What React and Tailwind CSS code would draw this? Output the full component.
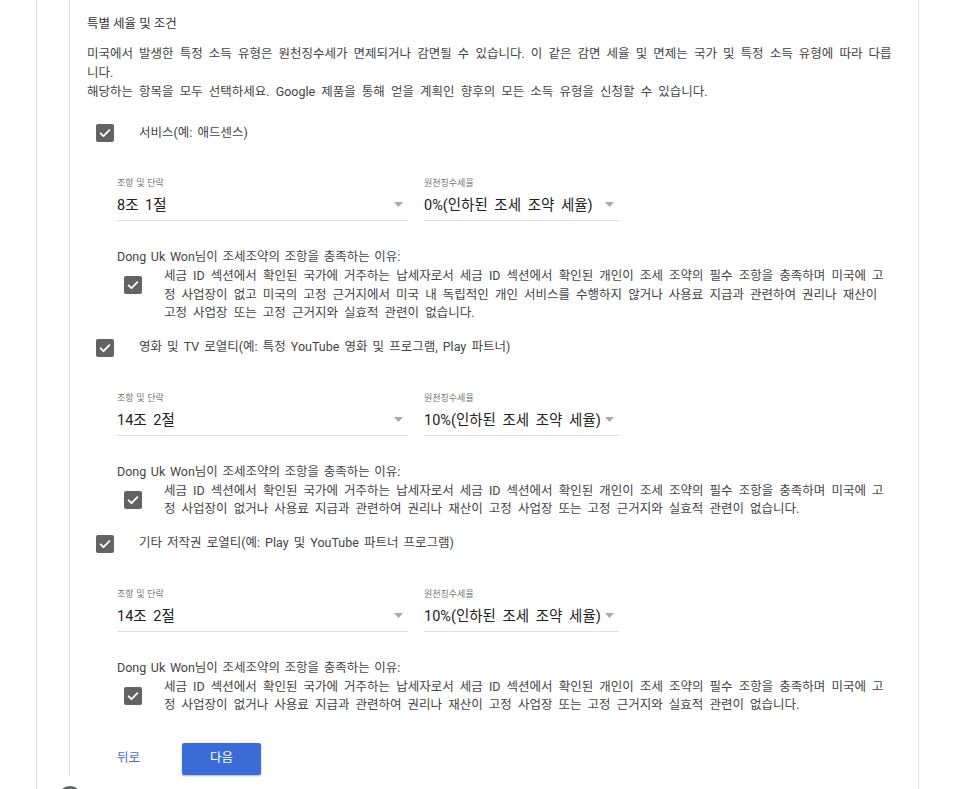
import React from 'react';

const sections = [
  {
    label: '서비스(예: 애드센스)',
    article: '8조 1절',
    rate: '0%(인하된 조세 조약 세율)',
    reason: [
      '세금 ID 섹션에서 확인된 국가에 거주하는 납세자로서 세금 ID 섹션에서 확인된 개인이 조세 조약의 필수 조항을 충족하며 미국에 고',
      '정 사업장이 없고 미국의 고정 근거지에서 미국 내 독립적인 개인 서비스를 수행하지 않거나 사용료 지급과 관련하여 권리나 재산이',
      '고정 사업장 또는 고정 근거지와 실효적 관련이 없습니다.',
    ],
  },
  {
    label: '영화 및 TV 로열티(예: 특정 YouTube 영화 및 프로그램, Play 파트너)',
    article: '14조 2절',
    rate: '10%(인하된 조세 조약 세율)',
    reason: [
      '세금 ID 섹션에서 확인된 국가에 거주하는 납세자로서 세금 ID 섹션에서 확인된 개인이 조세 조약의 필수 조항을 충족하며 미국에 고',
      '정 사업장이 없거나 사용료 지급과 관련하여 권리나 재산이 고정 사업장 또는 고정 근거지와 실효적 관련이 없습니다.',
    ],
  },
  {
    label: '기타 저작권 로열티(예: Play 및 YouTube 파트너 프로그램)',
    article: '14조 2절',
    rate: '10%(인하된 조세 조약 세율)',
    reason: [
      '세금 ID 섹션에서 확인된 국가에 거주하는 납세자로서 세금 ID 섹션에서 확인된 개인이 조세 조약의 필수 조항을 충족하며 미국에 고',
      '정 사업장이 없거나 사용료 지급과 관련하여 권리나 재산이 고정 사업장 또는 고정 근거지와 실효적 관련이 없습니다.',
    ],
  },
];

function Check() {
  return (
    <span className="flex h-[18px] w-[18px] shrink-0 items-center justify-center rounded-[2px] bg-[#636363]">
      <svg width="14" height="14" viewBox="0 0 14 14" fill="none">
        <path d="M2.6 7.3l2.9 2.9 5.9-6" stroke="#fff" strokeWidth="1.8" strokeLinecap="round" strokeLinejoin="round" />
      </svg>
    </span>
  );
}

function Arrow() {
  return (
    <svg width="9" height="5" viewBox="0 0 9 5" className="shrink-0 mb-[3px]">
      <path d="M0 0h9L4.5 5z" fill="#a8a8a8" />
    </svg>
  );
}

function Field({ label, value, width }) {
  return (
    <div className={width}>
      <div className="h-[12px] text-[9px] leading-[12px] text-[#757575] [word-spacing:0.5px]">{label}</div>
      <div className="mt-[7px] flex h-[20px] items-center justify-between pr-[5px]">
        <span className="whitespace-nowrap text-[14.5px] leading-[20px] text-[#222]">{value}</span>
        <Arrow />
      </div>
      <div className="mt-[4px] border-b border-[#e0e0e0]" />
    </div>
  );
}

function Section({ s, first }) {
  return (
    <div className={first ? 'mt-[23px]' : 'mt-[16px]'}>
      <div className="flex h-[18px] items-center pl-[9px]">
        <Check />
        <span className="ml-[25px] text-[12.5px] text-[#444] [word-spacing:2px]">{s.label}</span>
      </div>
      <div className="ml-[30px]">
        <div className="mt-[35px] flex gap-[16px]">
          <Field label="조항 및 단락" value={s.article} width="w-[291px]" />
          <Field label="원천징수세율" value={s.rate} width="w-[195px]" />
        </div>
        <div className="mt-[27px] text-[12.5px] leading-[18px] text-[#444] [word-spacing:1.5px]">
          Dong Uk Won님이 조세조약의 조항을 충족하는 이유:
        </div>
        <div className="mt-[1px] flex">
          <div className="ml-[7px] mt-[9px]">
            <Check />
          </div>
          <div className="ml-[22px] text-[12.5px] leading-[18.5px] text-[#444]">
            {s.reason.map((line, i) => (
              <div key={i} className="whitespace-nowrap">{line}</div>
            ))}
          </div>
        </div>
      </div>
    </div>
  );
}

export default function App() {
  return (
    <div className="h-[789px] overflow-hidden bg-white font-[Roboto,'Noto_Sans_CJK_KR',sans-serif] [word-spacing:3px]">
      <div className="ml-[36px] h-full w-[883px] border-x border-[#e0e0e0]">
        <div className="ml-[32px] h-[776px] border-l border-[#e0e0e0] pl-[17px] pt-[14px]">
          <h4 className="text-[12.5px] leading-[20px] text-[#333] [word-spacing:0px]">특별 세율 및 조건</h4>
          <p className="mt-[10px] text-[12.5px] leading-[19px] text-[#444]">
            <span className="block whitespace-nowrap">
              미국에서 발생한 특정 소득 유형은 원천징수세가 면제되거나 감면될 수 있습니다. 이 같은 감면 세율 및 면제는 국가 및 특정 소득 유형에 따라 다릅
            </span>
            <span className="block">니다.</span>
            <span className="block whitespace-nowrap">
              해당하는 항목을 모두 선택하세요. Google 제품을 통해 얻을 계획인 향후의 모든 소득 유형을 신청할 수 있습니다.
            </span>
          </p>

          {sections.map((s, i) => (
            <Section key={i} s={s} first={i === 0} />
          ))}

          <div className="ml-[30px] mt-[28px] flex items-center">
            <button className="text-[12.5px] text-[#4a72c4]">뒤로</button>
            <button className="ml-[42px] h-[32px] w-[79px] rounded-[2px] bg-[#3b6bd6] text-[12.5px] text-white shadow-[0_1px_2px_rgba(0,0,0,0.3)]">
              다음
            </button>
          </div>
        </div>
        <div className="ml-[21px] mt-[10px] h-6 w-6 rounded-full bg-[#5f6368]" />
      </div>
    </div>
  );
}
